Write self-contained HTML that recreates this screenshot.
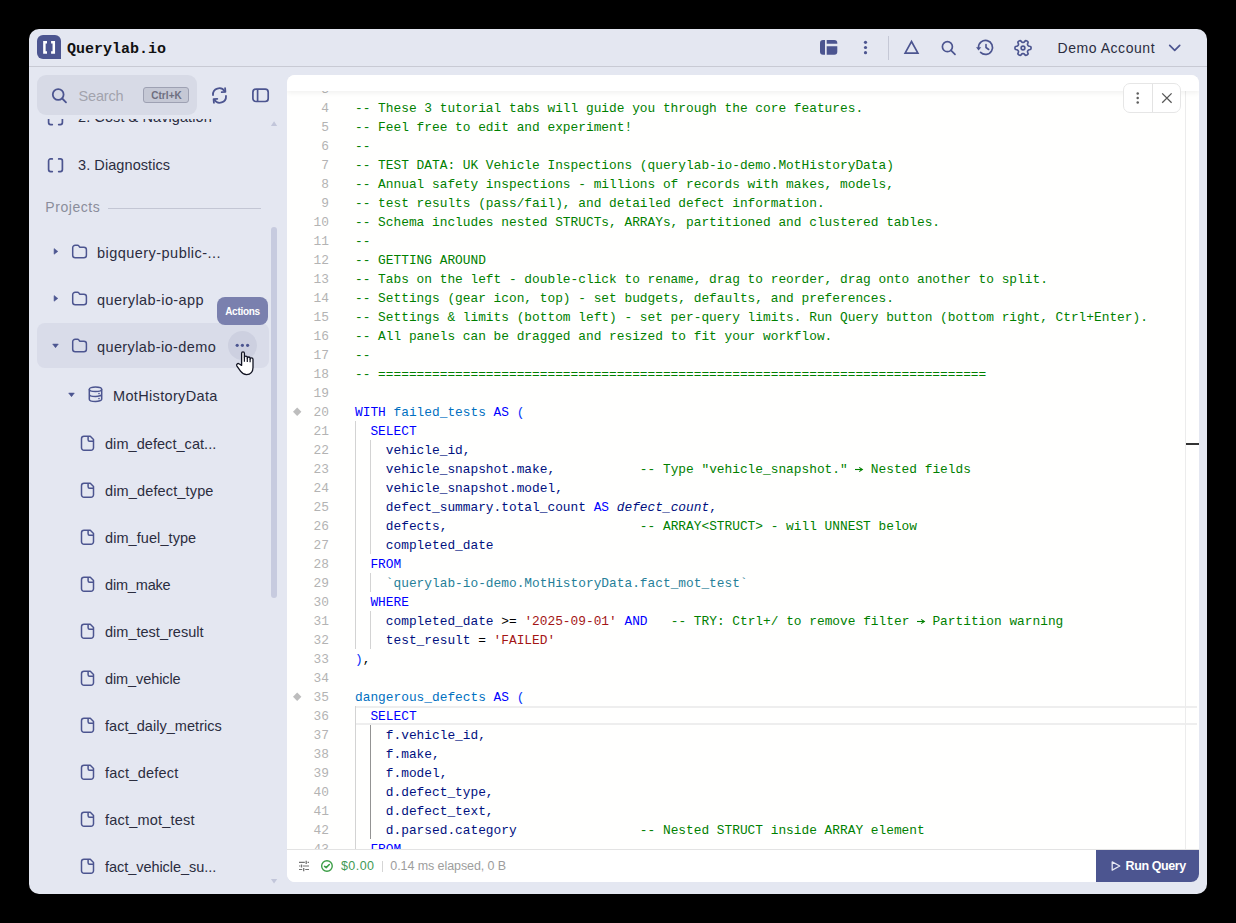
<!DOCTYPE html>
<html><head><meta charset="utf-8">
<style>
*{box-sizing:border-box;margin:0;padding:0}
html,body{width:1236px;height:923px;background:#000;overflow:hidden}
body{position:relative;font-family:"Liberation Sans",sans-serif}
.abs{position:absolute}
#win{position:absolute;left:29px;top:29px;width:1178px;height:865px;background:#e4e7f1;border-radius:10px;overflow:hidden}
#hdrline{position:absolute;left:29px;top:66px;width:1178px;height:1px;background:#c8cad4}
.ic{position:absolute;overflow:visible}
.ui{font-family:"Liberation Sans",sans-serif;white-space:pre;position:absolute}
#side{position:absolute;left:29px;top:67px;width:258px;height:827px;overflow:hidden}
.row{position:absolute;left:0;width:258px;height:47px}
.tt{position:absolute;font-size:14.5px;color:#2b2d3f;letter-spacing:0.08px;white-space:pre;line-height:16px}
#ed{position:absolute;left:287px;top:75px;width:912px;height:807px;background:#fffffe;border-radius:8px;overflow:hidden}
.code{position:absolute;left:0;top:0;width:912px;height:807px;font-family:"Liberation Mono",monospace;font-size:12.833px}
.ln{position:absolute;left:0;width:42px;text-align:right;color:#b3b3b3;line-height:19px;white-space:pre}
.cl{position:absolute;left:68px;line-height:19px;white-space:pre;color:#001080}
.b{color:#0431fa}.c{color:#008000}.k{color:#0000ff}.f{color:#0070c1}.s{color:#a31515}.q{color:#267f99}.o{color:#000}
.g{position:absolute;width:1px;background:#d3d3d3}
</style></head><body>
<div id="win"></div>
<div id="hdrline"></div>

<!-- logo -->
<div class="abs" style="left:37px;top:35px;width:24px;height:24px;background:#4c5590;border-radius:6px 6px 0 6px"></div>
<svg class="ic" style="left:37px;top:35px" width="24" height="24"><path d="M10 7.35H7.4V17.55H10M14.1 7.35H16.8V17.55H14.1" fill="none" stroke="#fff" stroke-width="2.5"/></svg>
<div class="abs" style="left:67px;top:40.5px;font-family:'Liberation Mono',monospace;font-weight:700;font-size:15px;color:#111;line-height:18px;white-space:pre">Querylab.io</div>

<!-- header right icons -->
<svg class="ic" style="left:818px;top:38px" width="22" height="19"><path d="M5 2.1H7V16.7H5A3 3 0 0 1 2 13.7V5.1A3 3 0 0 1 5 2.1Z M8.7 2.1H16.3A3 3 0 0 1 19.3 5.1V5.7H8.7Z M8.7 8.2H19.3V13.7A3 3 0 0 1 16.3 16.7H8.7Z" fill="#4c5590"/></svg>
<svg class="ic" style="left:860px;top:38px" width="12" height="19"><circle cx="5.5" cy="4.3" r="1.6" fill="#4c5590"/><circle cx="5.5" cy="9.5" r="1.6" fill="#4c5590"/><circle cx="5.5" cy="14.7" r="1.6" fill="#4c5590"/></svg>
<div class="abs" style="left:888px;top:36px;width:1px;height:24px;background:#c5c8d6"></div>
<svg class="ic" style="left:902px;top:38px" width="19" height="18"><path d="M9.5 3.5L15.9 15.1H3.1Z" fill="none" stroke="#4c5590" stroke-width="1.65" stroke-linejoin="miter"/></svg>
<svg class="ic" style="left:939px;top:38px" width="19" height="19"><circle cx="8.4" cy="8.7" r="5" fill="none" stroke="#4c5590" stroke-width="1.7"/><path d="M12 12.4L16 16.4" stroke="#4c5590" stroke-width="1.7" stroke-linecap="round"/></svg>
<svg class="ic" style="left:974px;top:37px" width="22" height="20"><path d="M4.5 10.5A7 7 0 1 1 6.6 15.4" fill="none" stroke="#4c5590" stroke-width="1.7" stroke-linecap="round"/><path d="M2 10.3H7.2L4.6 13.4Z" fill="#4c5590"/><path d="M12 7.5V10.5L14.7 12.5" fill="none" stroke="#4c5590" stroke-width="1.6" stroke-linecap="round"/></svg>
<svg class="ic" style="left:1011.5px;top:36.5px" width="22" height="22" viewBox="-1.6 -1.6 27.2 27.2"><g transform="rotate(90 12 12)"><path d="M12.22 2h-.44a2 2 0 0 0-2 2v.18a2 2 0 0 1-1 1.73l-.43.25a2 2 0 0 1-2 0l-.15-.08a2 2 0 0 0-2.73.73l-.22.38a2 2 0 0 0 .73 2.73l.15.1a2 2 0 0 1 1 1.72v.51a2 2 0 0 1-1 1.74l-.15.09a2 2 0 0 0-.73 2.73l.22.38a2 2 0 0 0 2.73.73l.15-.08a2 2 0 0 1 2 0l.43.25a2 2 0 0 1 1 1.73V20a2 2 0 0 0 2 2h.44a2 2 0 0 0 2-2v-.18a2 2 0 0 1 1-1.73l.43-.25a2 2 0 0 1 2 0l.15.08a2 2 0 0 0 2.73-.73l.22-.39a2 2 0 0 0-.73-2.73l-.15-.08a2 2 0 0 1-1-1.74v-.5a2 2 0 0 1 1-1.74l.15-.09a2 2 0 0 0 .73-2.73l-.22-.38a2 2 0 0 0-2.73-.73l-.15.08a2 2 0 0 1-2 0l-.43-.25a2 2 0 0 1-1-1.73V4a2 2 0 0 0-2-2z" fill="none" stroke="#4c5590" stroke-width="2.05"/><circle cx="12" cy="12" r="2.3" fill="none" stroke="#4c5590" stroke-width="2.05"/></g></svg>
<div class="ui" style="left:1057.5px;top:40px;font-size:14px;color:#2b2d3f;letter-spacing:0.545px;line-height:16px">Demo Account</div>
<svg class="ic" style="left:1166px;top:41px" width="17" height="12"><path d="M3.7 4.3L8.7 9.3L13.7 4.3" fill="none" stroke="#4c5590" stroke-width="1.7" stroke-linecap="round" stroke-linejoin="round"/></svg>

<!-- sidebar -->
<div id="side">
  <div class="tt" style="left:49px;top:42px">2. Cost &amp; Navigation</div>
  <svg class="ic" style="left:16px;top:43px" width="20" height="16"><path d="M7.3 1.9H5.6A2 2 0 0 0 3.6 3.9V12.6A2 2 0 0 0 5.6 14.6H7.3M13.7 1.9H15.4A2 2 0 0 1 17.4 3.9V12.6A2 2 0 0 1 15.4 14.6H13.7" fill="none" stroke="#4c5590" stroke-width="1.7" stroke-linecap="round"/></svg>
  <div class="tt" style="left:49px;top:90px">3. Diagnostics</div>
  <svg class="ic" style="left:16px;top:90px" width="20" height="16"><path d="M7.3 1.9H5.6A2 2 0 0 0 3.6 3.9V12.6A2 2 0 0 0 5.6 14.6H7.3M13.7 1.9H15.4A2 2 0 0 1 17.4 3.9V12.6A2 2 0 0 1 15.4 14.6H13.7" fill="none" stroke="#4c5590" stroke-width="1.7" stroke-linecap="round"/></svg>
</div>
<!-- search container covers top of list -->
<div class="abs" style="left:29px;top:67px;width:258px;height:51.5px;background:#e4e7f1"></div>
<div class="abs" style="left:37px;top:75px;width:160px;height:40px;background:#d7dae6;border-radius:9px"></div>
<svg class="ic" style="left:50px;top:86px" width="19" height="19"><circle cx="8.2" cy="8.5" r="5.4" fill="none" stroke="#4c5590" stroke-width="1.8"/><path d="M12.2 12.5L16 16.3" stroke="#4c5590" stroke-width="1.8" stroke-linecap="round"/></svg>
<div class="ui" style="left:78.5px;top:88px;font-size:14.5px;color:#a2a3ad;letter-spacing:-0.16px;line-height:16px">Search</div>
<div class="abs" style="left:143px;top:87px;width:46px;height:16px;background:#c5c8d5;border:1px solid #9ea1b3;border-radius:3px"></div>
<div class="ui" style="left:143.5px;top:88.5px;width:46px;text-align:center;font-size:10px;font-weight:700;color:#6e6f80;letter-spacing:0.06px;line-height:14px">Ctrl+K</div>
<svg class="ic" style="left:209px;top:85px" width="21" height="21"><path d="M4 10A6.3 6.3 0 0 1 15.6 6.2" fill="none" stroke="#4c5590" stroke-width="1.8" stroke-linecap="round"/><path d="M16.1 3.2L16.4 6.9L12.7 7.1" fill="none" stroke="#4c5590" stroke-width="1.8" stroke-linecap="round" stroke-linejoin="round"/><path d="M17 11A6.3 6.3 0 0 1 5.4 14.8" fill="none" stroke="#4c5590" stroke-width="1.8" stroke-linecap="round"/><path d="M4.9 17.8L4.6 14.1L8.3 13.9" fill="none" stroke="#4c5590" stroke-width="1.8" stroke-linecap="round" stroke-linejoin="round"/></svg>
<svg class="ic" style="left:250px;top:86px" width="21" height="19"><rect x="2.9" y="3.2" width="15.3" height="12.3" rx="3" fill="none" stroke="#4c5590" stroke-width="1.7"/><path d="M7.6 3.2V15.5" stroke="#4c5590" stroke-width="1.7"/></svg>

<div class="ui" style="left:45.3px;top:199.15px;font-size:14px;letter-spacing:0.55px;color:#8b8d9b;font-weight:400;line-height:16px">Projects</div>
<div class="abs" style="left:108px;top:208px;width:153px;height:1px;background:#c3c6d4"></div>
<div class="abs" style="left:271px;top:227px;width:6px;height:371px;background:#c7cbdf;border-radius:3px"></div>
<svg class="ic" style="left:270px;top:120px" width="8" height="7"><path d="M0.9 6H7.2L4.05 1.3Z" fill="#c2c6da"/></svg>
<svg class="ic" style="left:270px;top:878px" width="8" height="7"><path d="M0.9 1H7.2L4.05 5.6Z" fill="#c2c6da"/></svg>
<div class="abs" style="left:37px;top:323px;width:232px;height:45px;background:#d9dce9;border-radius:8px"></div>
<svg class="ic" style="left:52px;top:246px" width="8" height="10"><path d="M2.1 2.6L5.8 5.4L2.1 8.2Z" fill="#4c5590" stroke="#4c5590" stroke-width="0.6" stroke-linejoin="round"/></svg>
<svg class="ic" style="left:71px;top:243px" width="18" height="17"><path d="M4.2 2.3H6.6A1.5 1.5 0 0 1 7.8 2.9L8.4 3.7A1.5 1.5 0 0 0 9.6 4.3H12.9A2.5 2.5 0 0 1 15.4 6.8V12.3A2.5 2.5 0 0 1 12.9 14.8H4.2A2.5 2.5 0 0 1 1.7 12.3V4.8A2.5 2.5 0 0 1 4.2 2.3Z" fill="none" stroke="#4c5590" stroke-width="1.5"/></svg>
<div class="ui" style="left:97px;top:244.78px;font-size:14.5px;letter-spacing:0.461px;color:#2b2d3f;font-weight:400;line-height:16px">bigquery-public-...</div>
<svg class="ic" style="left:52px;top:293px" width="8" height="10"><path d="M2.1 2.6L5.8 5.4L2.1 8.2Z" fill="#4c5590" stroke="#4c5590" stroke-width="0.6" stroke-linejoin="round"/></svg>
<svg class="ic" style="left:71px;top:290px" width="18" height="17"><path d="M4.2 2.3H6.6A1.5 1.5 0 0 1 7.8 2.9L8.4 3.7A1.5 1.5 0 0 0 9.6 4.3H12.9A2.5 2.5 0 0 1 15.4 6.8V12.3A2.5 2.5 0 0 1 12.9 14.8H4.2A2.5 2.5 0 0 1 1.7 12.3V4.8A2.5 2.5 0 0 1 4.2 2.3Z" fill="none" stroke="#4c5590" stroke-width="1.5"/></svg>
<div class="ui" style="left:97px;top:291.78px;font-size:14.5px;letter-spacing:0.421px;color:#2b2d3f;font-weight:400;line-height:16px">querylab-io-app</div>
<svg class="ic" style="left:51px;top:343px" width="10" height="8"><path d="M1.7 1.1H7.3L4.5 4.7Z" fill="#4c5590" stroke="#4c5590" stroke-width="0.6" stroke-linejoin="round"/></svg>
<svg class="ic" style="left:71px;top:337px" width="18" height="17"><path d="M4.2 2.3H6.6A1.5 1.5 0 0 1 7.8 2.9L8.4 3.7A1.5 1.5 0 0 0 9.6 4.3H12.9A2.5 2.5 0 0 1 15.4 6.8V12.3A2.5 2.5 0 0 1 12.9 14.8H4.2A2.5 2.5 0 0 1 1.7 12.3V4.8A2.5 2.5 0 0 1 4.2 2.3Z" fill="none" stroke="#4c5590" stroke-width="1.5"/></svg>
<div class="ui" style="left:97px;top:338.78px;font-size:14.5px;letter-spacing:0.393px;color:#2b2d3f;font-weight:400;line-height:16px">querylab-io-demo</div>
<svg class="ic" style="left:67px;top:392px" width="10" height="8"><path d="M1.7 1.1H7.3L4.5 4.7Z" fill="#4c5590" stroke="#4c5590" stroke-width="0.6" stroke-linejoin="round"/></svg>
<svg class="ic" style="left:87px;top:384px" width="18" height="20"><ellipse cx="8.5" cy="5.3" rx="6.2" ry="2.3" fill="none" stroke="#4c5590" stroke-width="1.5"/><path d="M2.3 5.3V15.2A6.2 2.3 0 0 0 14.7 15.2V5.3M2.3 10.2A6.2 2.3 0 0 0 14.7 10.2" fill="none" stroke="#4c5590" stroke-width="1.5"/><circle cx="12" cy="9.6" r="0.8" fill="#4c5590"/><circle cx="12" cy="14.6" r="0.8" fill="#4c5590"/></svg>
<div class="ui" style="left:113px;top:387.68px;font-size:14.5px;letter-spacing:0.338px;color:#2b2d3f;font-weight:400;line-height:16px">MotHistoryData</div>
<svg class="ic" style="left:80px;top:434px" width="16" height="18"><path d="M10.3 2.3H4A2.5 2.5 0 0 0 1.5 4.8V13.7A2.5 2.5 0 0 0 4 16.2H11A2.5 2.5 0 0 0 13.5 13.7V5.5Z" fill="none" stroke="#4c5590" stroke-width="1.5" stroke-linejoin="round"/><path d="M8.1 2.3V5.8A1.5 1.5 0 0 0 9.6 7.3H13.5" fill="none" stroke="#4c5590" stroke-width="1.5"/></svg>
<div class="ui" style="left:105px;top:436.48px;font-size:14.5px;letter-spacing:0.056px;color:#2b2d3f;font-weight:400;line-height:16px">dim_defect_cat...</div>
<svg class="ic" style="left:80px;top:481px" width="16" height="18"><path d="M10.3 2.3H4A2.5 2.5 0 0 0 1.5 4.8V13.7A2.5 2.5 0 0 0 4 16.2H11A2.5 2.5 0 0 0 13.5 13.7V5.5Z" fill="none" stroke="#4c5590" stroke-width="1.5" stroke-linejoin="round"/><path d="M8.1 2.3V5.8A1.5 1.5 0 0 0 9.6 7.3H13.5" fill="none" stroke="#4c5590" stroke-width="1.5"/></svg>
<div class="ui" style="left:105px;top:483.48px;font-size:14.5px;letter-spacing:0.143px;color:#2b2d3f;font-weight:400;line-height:16px">dim_defect_type</div>
<svg class="ic" style="left:80px;top:528px" width="16" height="18"><path d="M10.3 2.3H4A2.5 2.5 0 0 0 1.5 4.8V13.7A2.5 2.5 0 0 0 4 16.2H11A2.5 2.5 0 0 0 13.5 13.7V5.5Z" fill="none" stroke="#4c5590" stroke-width="1.5" stroke-linejoin="round"/><path d="M8.1 2.3V5.8A1.5 1.5 0 0 0 9.6 7.3H13.5" fill="none" stroke="#4c5590" stroke-width="1.5"/></svg>
<div class="ui" style="left:105px;top:530.48px;font-size:14.5px;letter-spacing:0.075px;color:#2b2d3f;font-weight:400;line-height:16px">dim_fuel_type</div>
<svg class="ic" style="left:80px;top:575px" width="16" height="18"><path d="M10.3 2.3H4A2.5 2.5 0 0 0 1.5 4.8V13.7A2.5 2.5 0 0 0 4 16.2H11A2.5 2.5 0 0 0 13.5 13.7V5.5Z" fill="none" stroke="#4c5590" stroke-width="1.5" stroke-linejoin="round"/><path d="M8.1 2.3V5.8A1.5 1.5 0 0 0 9.6 7.3H13.5" fill="none" stroke="#4c5590" stroke-width="1.5"/></svg>
<div class="ui" style="left:105px;top:577.48px;font-size:14.5px;letter-spacing:-0.171px;color:#2b2d3f;font-weight:400;line-height:16px">dim_make</div>
<svg class="ic" style="left:80px;top:622px" width="16" height="18"><path d="M10.3 2.3H4A2.5 2.5 0 0 0 1.5 4.8V13.7A2.5 2.5 0 0 0 4 16.2H11A2.5 2.5 0 0 0 13.5 13.7V5.5Z" fill="none" stroke="#4c5590" stroke-width="1.5" stroke-linejoin="round"/><path d="M8.1 2.3V5.8A1.5 1.5 0 0 0 9.6 7.3H13.5" fill="none" stroke="#4c5590" stroke-width="1.5"/></svg>
<div class="ui" style="left:105px;top:624.48px;font-size:14.5px;letter-spacing:0.014px;color:#2b2d3f;font-weight:400;line-height:16px">dim_test_result</div>
<svg class="ic" style="left:80px;top:669px" width="16" height="18"><path d="M10.3 2.3H4A2.5 2.5 0 0 0 1.5 4.8V13.7A2.5 2.5 0 0 0 4 16.2H11A2.5 2.5 0 0 0 13.5 13.7V5.5Z" fill="none" stroke="#4c5590" stroke-width="1.5" stroke-linejoin="round"/><path d="M8.1 2.3V5.8A1.5 1.5 0 0 0 9.6 7.3H13.5" fill="none" stroke="#4c5590" stroke-width="1.5"/></svg>
<div class="ui" style="left:105px;top:671.48px;font-size:14.5px;letter-spacing:-0.09px;color:#2b2d3f;font-weight:400;line-height:16px">dim_vehicle</div>
<svg class="ic" style="left:80px;top:716px" width="16" height="18"><path d="M10.3 2.3H4A2.5 2.5 0 0 0 1.5 4.8V13.7A2.5 2.5 0 0 0 4 16.2H11A2.5 2.5 0 0 0 13.5 13.7V5.5Z" fill="none" stroke="#4c5590" stroke-width="1.5" stroke-linejoin="round"/><path d="M8.1 2.3V5.8A1.5 1.5 0 0 0 9.6 7.3H13.5" fill="none" stroke="#4c5590" stroke-width="1.5"/></svg>
<div class="ui" style="left:105px;top:718.48px;font-size:14.5px;letter-spacing:0.047px;color:#2b2d3f;font-weight:400;line-height:16px">fact_daily_metrics</div>
<svg class="ic" style="left:80px;top:763px" width="16" height="18"><path d="M10.3 2.3H4A2.5 2.5 0 0 0 1.5 4.8V13.7A2.5 2.5 0 0 0 4 16.2H11A2.5 2.5 0 0 0 13.5 13.7V5.5Z" fill="none" stroke="#4c5590" stroke-width="1.5" stroke-linejoin="round"/><path d="M8.1 2.3V5.8A1.5 1.5 0 0 0 9.6 7.3H13.5" fill="none" stroke="#4c5590" stroke-width="1.5"/></svg>
<div class="ui" style="left:105px;top:765.48px;font-size:14.5px;letter-spacing:0.24px;color:#2b2d3f;font-weight:400;line-height:16px">fact_defect</div>
<svg class="ic" style="left:80px;top:810px" width="16" height="18"><path d="M10.3 2.3H4A2.5 2.5 0 0 0 1.5 4.8V13.7A2.5 2.5 0 0 0 4 16.2H11A2.5 2.5 0 0 0 13.5 13.7V5.5Z" fill="none" stroke="#4c5590" stroke-width="1.5" stroke-linejoin="round"/><path d="M8.1 2.3V5.8A1.5 1.5 0 0 0 9.6 7.3H13.5" fill="none" stroke="#4c5590" stroke-width="1.5"/></svg>
<div class="ui" style="left:105px;top:812.48px;font-size:14.5px;letter-spacing:0.2px;color:#2b2d3f;font-weight:400;line-height:16px">fact_mot_test</div>
<svg class="ic" style="left:80px;top:857px" width="16" height="18"><path d="M10.3 2.3H4A2.5 2.5 0 0 0 1.5 4.8V13.7A2.5 2.5 0 0 0 4 16.2H11A2.5 2.5 0 0 0 13.5 13.7V5.5Z" fill="none" stroke="#4c5590" stroke-width="1.5" stroke-linejoin="round"/><path d="M8.1 2.3V5.8A1.5 1.5 0 0 0 9.6 7.3H13.5" fill="none" stroke="#4c5590" stroke-width="1.5"/></svg>
<div class="ui" style="left:105px;top:859.48px;font-size:14.5px;letter-spacing:-0.047px;color:#2b2d3f;font-weight:400;line-height:16px">fact_vehicle_su...</div>
<div class="abs" style="left:228px;top:331px;width:29px;height:29px;border-radius:50%;background:#cdd0e0"></div>
<svg class="ic" style="left:230px;top:340px" width="25" height="10"><circle cx="7.2" cy="5.3" r="1.6" fill="#4c5590"/><circle cx="12.4" cy="5.3" r="1.6" fill="#4c5590"/><circle cx="17.6" cy="5.3" r="1.6" fill="#4c5590"/></svg>
<div class="abs" style="left:217px;top:297px;width:51px;height:28px;background:#7a80ae;border-radius:8px"></div>
<div class="ui" style="left:217px;width:51px;text-align:center;top:303.84px;font-size:10px;letter-spacing:-0.3px;color:#fff;font-weight:700;line-height:16px">Actions</div>
<svg class="ic" style="left:228px;top:345px" width="34" height="34"><path d="M13.6 20.4V8.2A1.4 1.4 0 0 1 16.4 8.2V12.5A1.45 1.45 0 0 1 19.3 12.5V13.4A1.4 1.4 0 0 1 22.1 13.4V14.3A1.45 1.45 0 0 1 25 14.3V22.5C25 26.5 22.6 29.6 18.6 29.6C16 29.6 14 28.3 12.5 26.2L8.8 20.8C8 19.4 9.8 18 11 18.8Z" fill="#fff" stroke="#111322" stroke-width="1.3" stroke-linejoin="round"/><path d="M16.4 12.5V16.8M19.3 13.4V17M22.1 14.3V17.2" stroke="#111322" stroke-width="1.2"/></svg>
<!-- editor -->
<div id="ed"><div class="code"><div class="abs" style="left:68px;top:631px;width:842px;height:19px;border-top:2px solid #eeeeee;border-bottom:2px solid #eeeeee"></div>
<div class="ln" style="top:5px">3</div>
<div class="cl" style="top:5px"><span class="c">--</span></div>
<div class="ln" style="top:24px">4</div>
<div class="cl" style="top:24px"><span class="c">-- These 3 tutorial tabs will guide you through the core features.</span></div>
<div class="ln" style="top:43px">5</div>
<div class="cl" style="top:43px"><span class="c">-- Feel free to edit and experiment!</span></div>
<div class="ln" style="top:62px">6</div>
<div class="cl" style="top:62px"><span class="c">--</span></div>
<div class="ln" style="top:81px">7</div>
<div class="cl" style="top:81px"><span class="c">-- TEST DATA: UK Vehicle Inspections (querylab-io-demo.MotHistoryData)</span></div>
<div class="ln" style="top:100px">8</div>
<div class="cl" style="top:100px"><span class="c">-- Annual safety inspections - millions of records with makes, models,</span></div>
<div class="ln" style="top:119px">9</div>
<div class="cl" style="top:119px"><span class="c">-- test results (pass/fail), and detailed defect information.</span></div>
<div class="ln" style="top:138px">10</div>
<div class="cl" style="top:138px"><span class="c">-- Schema includes nested STRUCTs, ARRAYs, partitioned and clustered tables.</span></div>
<div class="ln" style="top:157px">11</div>
<div class="cl" style="top:157px"><span class="c">--</span></div>
<div class="ln" style="top:176px">12</div>
<div class="cl" style="top:176px"><span class="c">-- GETTING AROUND</span></div>
<div class="ln" style="top:195px">13</div>
<div class="cl" style="top:195px"><span class="c">-- Tabs on the left - double-click to rename, drag to reorder, drag onto another to split.</span></div>
<div class="ln" style="top:214px">14</div>
<div class="cl" style="top:214px"><span class="c">-- Settings (gear icon, top) - set budgets, defaults, and preferences.</span></div>
<div class="ln" style="top:233px">15</div>
<div class="cl" style="top:233px"><span class="c">-- Settings &amp; limits (bottom left) - set per-query limits. Run Query button (bottom right, Ctrl+Enter).</span></div>
<div class="ln" style="top:252px">16</div>
<div class="cl" style="top:252px"><span class="c">-- All panels can be dragged and resized to fit your workflow.</span></div>
<div class="ln" style="top:271px">17</div>
<div class="cl" style="top:271px"><span class="c">--</span></div>
<div class="ln" style="top:290px">18</div>
<div class="cl" style="top:290px"><span class="c">-- ===============================================================================</span></div>
<div class="ln" style="top:309px">19</div>
<div class="ln" style="top:328px">20</div>
<div class="cl" style="top:328px"><span class="k">WITH</span> <span class="f">failed_tests</span> <span class="k">AS</span> <span class="b">(</span></div>
<div class="ln" style="top:347px">21</div>
<div class="cl" style="top:347px">  <span class="k">SELECT</span></div>
<div class="ln" style="top:366px">22</div>
<div class="cl" style="top:366px">    vehicle_id,</div>
<div class="ln" style="top:385px">23</div>
<div class="cl" style="top:385px">    vehicle_snapshot.make,           <span class="c">-- Type &quot;vehicle_snapshot.&quot; <span style="display:inline-block;width:7.7px;height:19px;vertical-align:top;position:relative"><svg style="position:absolute;left:0;top:0" width="9" height="19"><path d="M0 9.5H7.3" stroke="#008000" stroke-width="1.1"/><path d="M4.2 7.4L7.4 9.5L4.2 11.6" fill="none" stroke="#008000" stroke-width="1.05"/></svg></span> Nested fields</span></div>
<div class="ln" style="top:404px">24</div>
<div class="cl" style="top:404px">    vehicle_snapshot.model,</div>
<div class="ln" style="top:423px">25</div>
<div class="cl" style="top:423px">    defect_summary.total_count <span class="k">AS</span> <span style="font-style:italic">defect_count</span>,</div>
<div class="ln" style="top:442px">26</div>
<div class="cl" style="top:442px">    defects,                         <span class="c">-- ARRAY&lt;STRUCT&gt; - will UNNEST below</span></div>
<div class="ln" style="top:461px">27</div>
<div class="cl" style="top:461px">    completed_date</div>
<div class="ln" style="top:480px">28</div>
<div class="cl" style="top:480px">  <span class="k">FROM</span></div>
<div class="ln" style="top:499px">29</div>
<div class="cl" style="top:499px">    <span class="q">`querylab-io-demo.MotHistoryData.fact_mot_test`</span></div>
<div class="ln" style="top:518px">30</div>
<div class="cl" style="top:518px">  <span class="k">WHERE</span></div>
<div class="ln" style="top:537px">31</div>
<div class="cl" style="top:537px">    completed_date <span class="o">&gt;=</span> <span class="s">&#x27;2025-09-01&#x27;</span> <span class="k">AND</span>   <span class="c">-- TRY: Ctrl+/ to remove filter <span style="display:inline-block;width:7.7px;height:19px;vertical-align:top;position:relative"><svg style="position:absolute;left:0;top:0" width="9" height="19"><path d="M0 9.5H7.3" stroke="#008000" stroke-width="1.1"/><path d="M4.2 7.4L7.4 9.5L4.2 11.6" fill="none" stroke="#008000" stroke-width="1.05"/></svg></span> Partition warning</span></div>
<div class="ln" style="top:556px">32</div>
<div class="cl" style="top:556px">    test_result <span class="o">=</span> <span class="s">&#x27;FAILED&#x27;</span></div>
<div class="ln" style="top:575px">33</div>
<div class="cl" style="top:575px"><span class="b">)</span><span class="o">,</span></div>
<div class="ln" style="top:594px">34</div>
<div class="ln" style="top:613px">35</div>
<div class="cl" style="top:613px"><span class="f">dangerous_defects</span> <span class="k">AS</span> <span class="b">(</span></div>
<div class="ln" style="top:632px">36</div>
<div class="cl" style="top:632px">  <span class="k">SELECT</span></div>
<div class="ln" style="top:651px">37</div>
<div class="cl" style="top:651px">    f.vehicle_id,</div>
<div class="ln" style="top:670px">38</div>
<div class="cl" style="top:670px">    f.make,</div>
<div class="ln" style="top:689px">39</div>
<div class="cl" style="top:689px">    f.model,</div>
<div class="ln" style="top:708px">40</div>
<div class="cl" style="top:708px">    d.defect_type,</div>
<div class="ln" style="top:727px">41</div>
<div class="cl" style="top:727px">    d.defect_text,</div>
<div class="ln" style="top:746px">42</div>
<div class="cl" style="top:746px">    d.parsed.category                <span class="c">-- Nested STRUCT inside ARRAY element</span></div>
<div class="ln" style="top:765px">43</div>
<div class="cl" style="top:765px">  <span class="k">FROM</span></div>
<div class="g" style="left:68px;top:346px;height:228px;background:#d3d3d3"></div>
<div class="g" style="left:83px;top:365px;height:114px;background:#d3d3d3"></div>
<div class="g" style="left:83px;top:498px;height:19px;background:#d3d3d3"></div>
<div class="g" style="left:83px;top:536px;height:38px;background:#d3d3d3"></div>
<div class="g" style="left:68px;top:631px;height:152px;background:#d3d3d3"></div>
<div class="g" style="left:83px;top:650px;height:114px;background:#939393"></div>
<svg class="ic" style="left:5.800000000000011px;top:332px" width="9" height="10"><path d="M4.2 0.6L8.4 4.8L4.2 9L0 4.8Z" fill="#bdbdbd"/></svg>
<svg class="ic" style="left:5.800000000000011px;top:617px" width="9" height="10"><path d="M4.2 0.6L8.4 4.8L4.2 9L0 4.8Z" fill="#bdbdbd"/></svg>
<div class="abs" style="left:898px;top:16px;width:1px;height:758px;background:#ececec"></div>
<div class="abs" style="left:899px;top:368px;width:13px;height:2px;background:#333"></div>
<div class="abs" style="left:0;top:0;width:912px;height:16px;background:#fff;box-shadow:0 2px 5px rgba(0,0,0,0.06)"></div>
<div class="abs" style="left:836px;top:8px;width:58px;height:30px;background:#fff;border:1px solid #e6e6e6;border-radius:7px"></div>
<div class="abs" style="left:865px;top:9px;width:1px;height:28px;background:#e3e3e3"></div>
<svg class="ic" style="left:846px;top:15px" width="10" height="16"><circle cx="4.7" cy="3.5" r="1.25" fill="#5f5f5f"/><circle cx="4.7" cy="7.9" r="1.25" fill="#5f5f5f"/><circle cx="4.7" cy="12.4" r="1.25" fill="#5f5f5f"/></svg>
<svg class="ic" style="left:872px;top:15px" width="16" height="16"><path d="M3.2 3.4L12.6 12.8M12.6 3.4L3.2 12.8" stroke="#585858" stroke-width="1.3"/></svg>
<div class="abs" style="left:0;top:774px;width:912px;height:33px;background:#fff;border-top:1px solid #e3e3e3"></div>
<svg class="ic" style="left:5px;top:779px" width="20" height="20"><path d="M7 8.3H12.8M15.6 8.3H17M7 12H8.3M10.8 12H17M7 15.5H10.2M13.2 15.5H17" stroke="#737373" stroke-width="1.2"/><path d="M14.2 6.8V10M9.5 10.5V13.6M11.7 14V17.2" stroke="#737373" stroke-width="1.3"/></svg>
<svg class="ic" style="left:32px;top:783px" width="16" height="16"><circle cx="7.95" cy="8" r="5.3" fill="none" stroke="#3d9e48" stroke-width="1.4"/><path d="M5.6 8.4L7.2 9.6L10.3 6.5" fill="none" stroke="#3d9e48" stroke-width="1.6" stroke-linecap="round" stroke-linejoin="round"/></svg>
<div class="ui" style="left:54px;top:783.17px;font-size:12.5px;letter-spacing:0.42px;color:#3f9a55;font-weight:400;line-height:16px">$0.00</div>
<div class="abs" style="left:95px;top:786px;width:1px;height:11px;background:#d5d5d5"></div>
<div class="ui" style="left:103.30000000000001px;top:783.17px;font-size:12.5px;letter-spacing:-0.08px;color:#9d9d9d;font-weight:400;line-height:16px">0.14 ms elapsed, 0 B</div>
<div class="abs" style="left:809px;top:775px;width:103px;height:32px;background:#4c5590"></div>
<svg class="ic" style="left:822px;top:784px" width="14" height="14"><path d="M3.2 2.9L10.8 7L3.2 11.1Z" fill="none" stroke="#e6e8f3" stroke-width="1.3" stroke-linejoin="round"/></svg>
<div class="ui" style="left:838.5px;top:783.17px;font-size:12.5px;letter-spacing:-0.39px;color:#fff;font-weight:700;line-height:16px">Run Query</div></div></div>
</body></html>
